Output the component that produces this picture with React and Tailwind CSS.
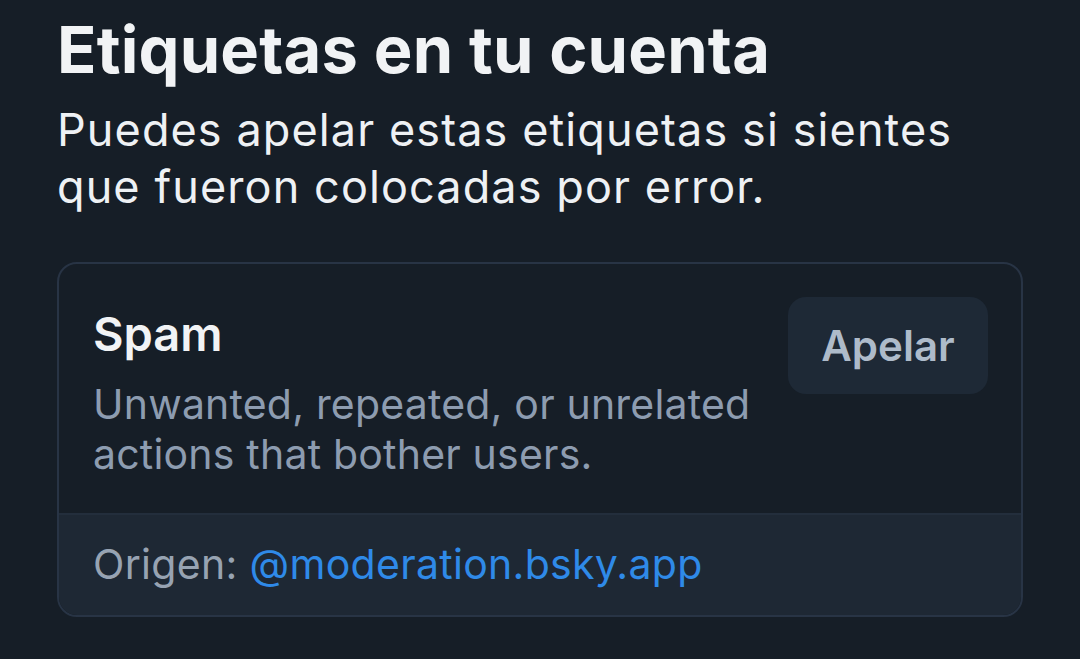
export default function App() {
  return (
    <div className="min-h-[659px] w-[1080px] bg-[#161e27] px-[57px] pt-[12px] font-['Inter',sans-serif] text-[#f1f3f5]">
      <h1 className="text-[65px] font-bold leading-[76px] tracking-[0.2px]">Etiquetas en tu cuenta</h1>
      <p className="mt-[13px] w-[930px] text-[45px] leading-[57px] tracking-[1.1px] text-[#eef1f4]">
        Puedes apelar estas etiquetas si sientes que fueron colocadas por error.
      </p>

      <div className="mt-[47px] overflow-hidden rounded-[20px] border-2 border-[#283445]">
        <div className="flex items-start justify-between pb-[34px] pl-[34px] pr-[33px] pt-[33px]">
          <div className="pt-[12px]">
            <div className="text-[47px] font-semibold leading-[50px]">Spam</div>
            <div className="mt-[20px] w-[680px] text-[41px] leading-[50px] tracking-[0.2px] text-[#8d9cb0]">
              Unwanted, repeated, or unrelated actions that bother users.
            </div>
          </div>
          <button className="flex h-[97px] w-[200px] items-center justify-center rounded-[18px] bg-[#1e2936] text-[42px] font-semibold text-[#aebbca]">
            Apelar
          </button>
        </div>
        <div className="flex h-[102px] items-center border-t-2 border-[#232e3c] bg-[#1e2834] pl-[34px] text-[41px] tracking-[0.3px]">
          <span className="text-[#97a3b2]">Origen:</span>
          <span className="ml-[12px] text-[#2f8ae8]">@moderation.bsky.app</span>
        </div>
      </div>
    </div>
  )
}
